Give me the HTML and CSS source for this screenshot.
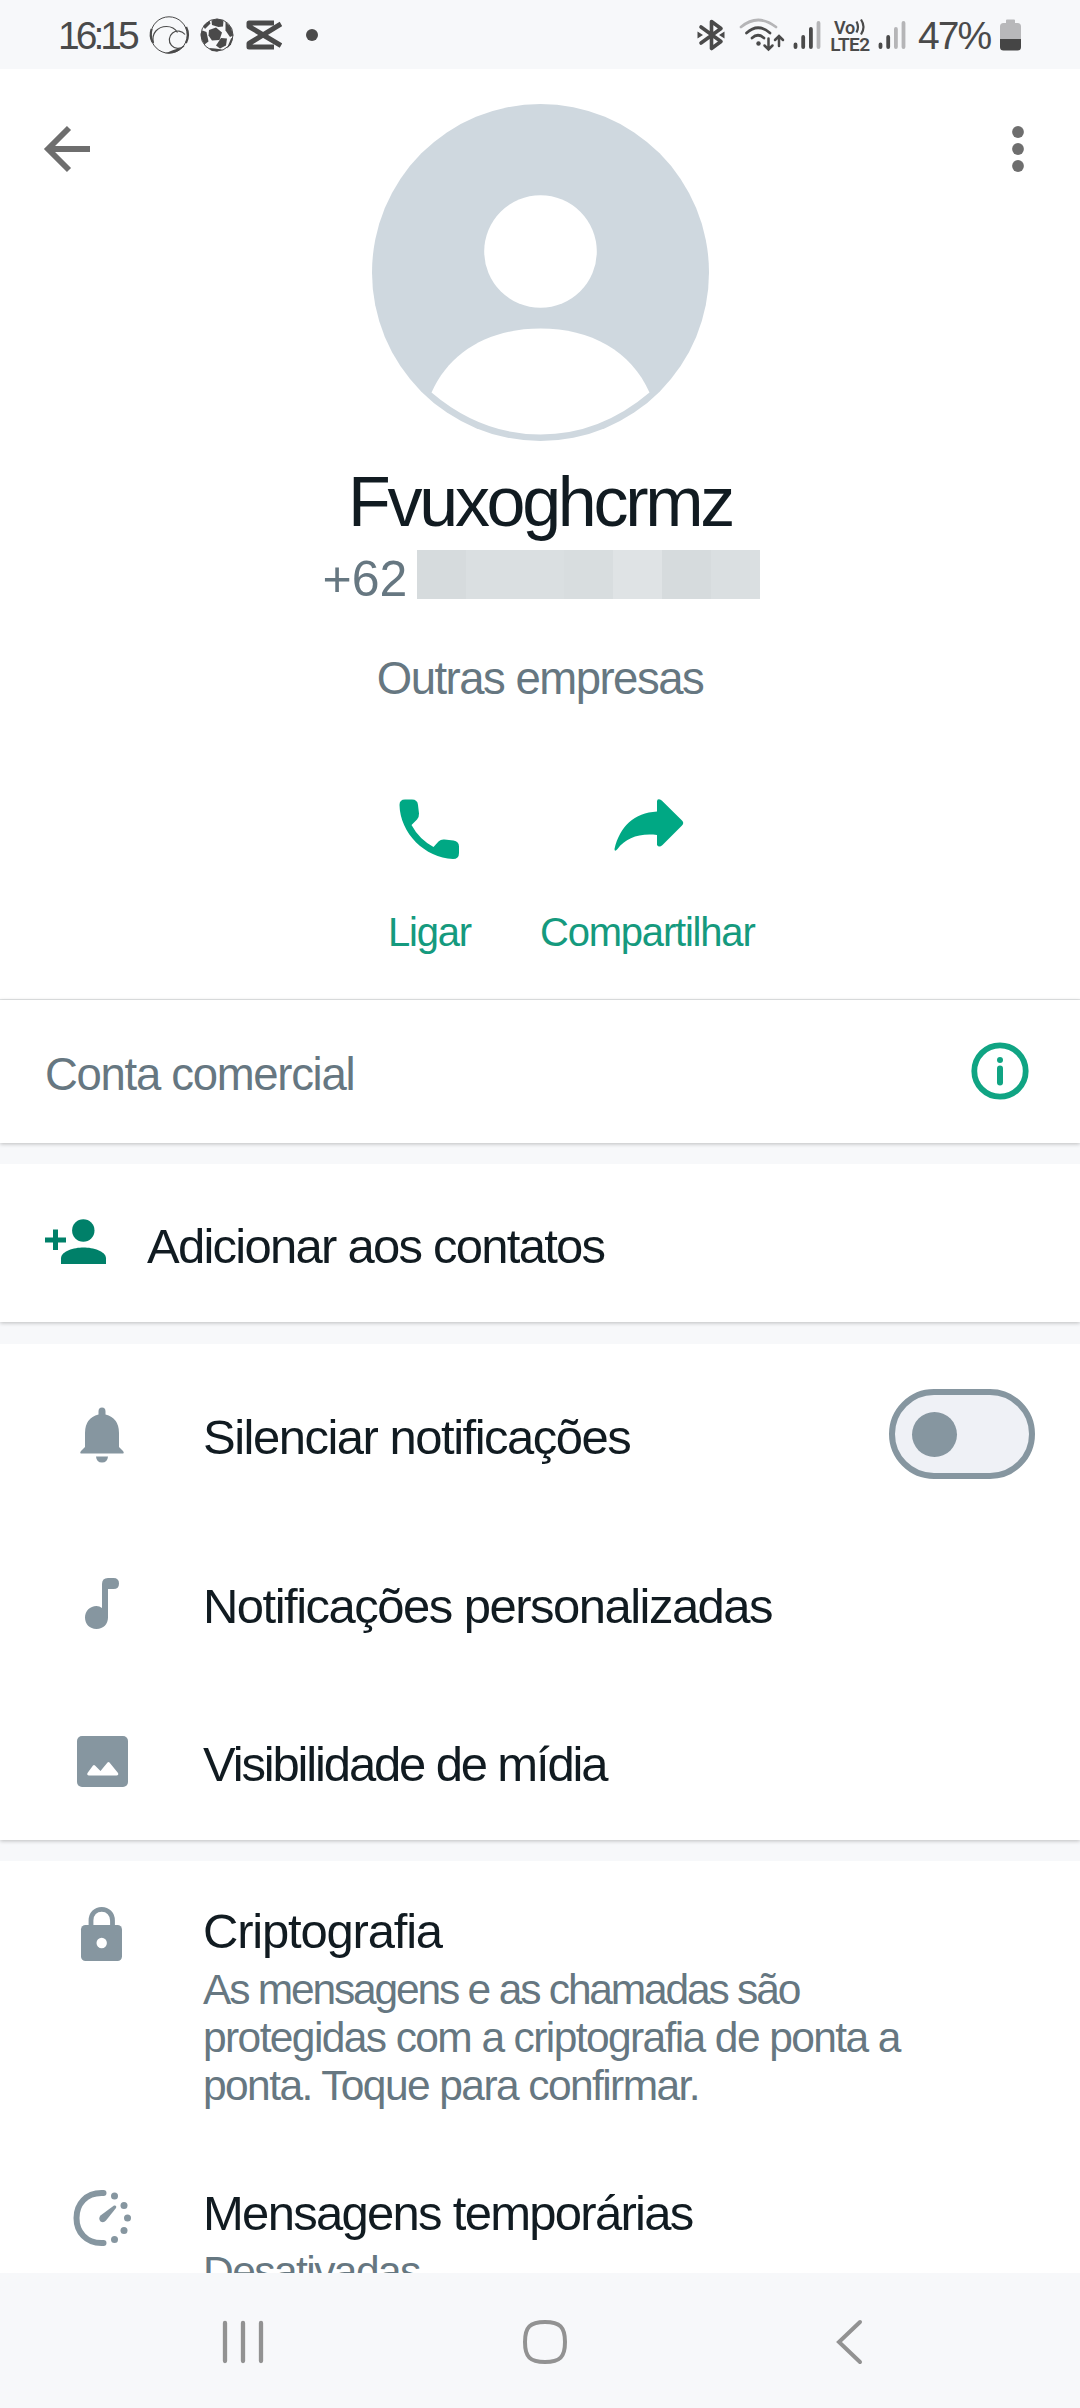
FILE: index.html
```html
<!DOCTYPE html>
<html lang="pt-BR">
<head>
<meta charset="utf-8">
<title>Dados do contato</title>
<link rel="stylesheet" href="styles.css">
</head>
<body>
<div class="screen">
  <header class="status">
    <div class="status-left">
      <span class="clock">16:15</span>
      <svg class="st-swirl" width="40" height="40" viewBox="0 0 40 40" fill="none" stroke="#4a4a4a">
        <circle cx="20" cy="20" r="18.2" stroke-width="1"/>
        <path d="M3.5 27A17.6 17.6 0 0 1 2.6 14" stroke-width="2.2"/>
        <path d="M37.2 12A18 18 0 0 1 37 28" stroke-width="2"/>
        <path d="M4.5 28C2 18 9 11.500 17.500 11.500C23.500 11.500 27 15 28.500 17.500" stroke-width="1.200"/>
        <path d="M36 19.500A8.700 8.700 0 1 0 35 31" stroke-width="1.200"/>
        <path d="M14 37.800C21 38.500 22 34 33 33C29 37.500 22 39.500 14 37.800Z" fill="#4a4a4a" stroke="none"/>
      </svg>
      <svg class="st-ball" width="34" height="34" viewBox="0 0 34 34">
        <circle cx="17" cy="17" r="16" fill="#f7f8fa" stroke="#4a4a4a" stroke-width="1"/>
        <g fill="#4a4a4a">
          <path d="M9 12L16 9.500L22 14.500L19.500 22L12 22.500L8.500 17.500Z"/>
          <path d="M11.500 2.500L17 .8L23.500 2.500L23 8.500L18.500 9L12 7Z"/>
          <path d="M25.500 3.800L31 9.500L33.300 17.500L30 19L25.500 12.500Z"/>
          <path d="M2.500 12.500L6.500 14L8.500 23.500L4.500 26.500L1 20L.8 15Z"/>
          <path d="M16 27.500L21 20L27 20.500L26 27.500L20 30.500Z"/>
          <path d="M9 30L15 30.500L22 31.500L17 33.500L12 33Z"/>
          <path d="M28.500 26.500L31 20.500L33 19.500L31 26.500L27 30.500Z"/>
          <path d="M3 8L9.500 2.800L10.500 5.500L5 11Z"/>
        </g>
      </svg>
      <svg class="st-cut" width="36" height="30" viewBox="0 0 36 30" fill="none" stroke="#4a4a4a" stroke-width="5" stroke-linejoin="round">
        <path d="M28 3H3V6.500L35 25.500"/>
        <path d="M28 27H3V23.500L35 4"/>
      </svg>
      <span class="st-dot"></span>
    </div>
    <div class="status-right">
      <svg class="st-bt" width="28" height="32" viewBox="0 0 28 32">
        <path d="M4 8L24 22.500L14.500 29.500V2.500L24 9.500L4 24" fill="none" stroke="#4a4a4a" stroke-width="3.600" stroke-linejoin="round" stroke-linecap="round"/>
        <path d="M.5 12.500L6 16L.5 19.500ZM27.500 12.500L22 16L27.500 19.500Z" fill="#4a4a4a"/>
      </svg>
      <svg class="st-wifi" width="46" height="34" viewBox="0 0 46 34" fill="none" stroke="#4a4a4a" stroke-width="2.700" stroke-linecap="round">
        <path d="M2 9Q19 -5 37 9" stroke="#b5b5b7"/>
        <path d="M7.500 15Q19 4.500 31 15"/>
        <path d="M13 20Q19 14.500 25 20"/>
        <circle cx="19.500" cy="25.500" r="2.200" fill="#4a4a4a" stroke="none"/>
        <path d="M29.500 20.500V31M25.500 27.500L29.500 31.500L33.500 27.500M40 28V19M36 22L40 18L44 22" stroke-width="2.500"/>
      </svg>
      <svg class="st-sig1" width="28" height="30" viewBox="0 0 28 30" stroke-width="3.800" stroke-linecap="round">
        <path d="M2.500 24.500V27M10.200 17V27M17.900 9V27" stroke="#4a4a4a"/>
        <path d="M25.500 3V27" stroke="#b5b5b7"/>
      </svg>
      <div class="volte"><span class="vo">Vo<svg width="11" height="16" viewBox="0 0 11 16" fill="none" stroke="#4a4a4a" stroke-width="2.200"><path d="M1.500 2.500Q4.500 8 1.500 13.500M6 .5Q11 8 6 15.500"/></svg></span><span class="lte">LTE2</span></div>
      <svg class="st-sig2" width="28" height="30" viewBox="0 0 28 30" stroke-width="3.800" stroke-linecap="round">
        <path d="M2.500 24.500V27M10.200 17V27" stroke="#4a4a4a"/>
        <path d="M17.900 9V27M25.500 3V27" stroke="#b5b5b7"/>
      </svg>
      <span class="percent">47%</span>
      <svg class="st-bat" width="21" height="32" viewBox="0 0 21 32">
        <path d="M6 1.500Q6 .5 7 .5H14Q15 .5 15 1.500V4H17.500Q21 4 21 7.500V20H0V7.500Q0 4 3.500 4H6Z" fill="#b8b8ba"/>
        <path d="M0 20H21V28Q21 31.500 17.500 31.500H3.500Q0 31.500 0 28Z" fill="#454545"/>
      </svg>
    </div>
  </header>

  <section class="profile">
    <div class="topbar">
      <svg class="back" width="48" height="48" viewBox="0 0 48 48" fill="none" stroke="#6e6e6e" stroke-width="5.800"><path d="M47 24H5M26 3L5 24L26 45"/></svg>
      <svg class="avatar" width="337" height="337" viewBox="0 0 337 337">
        <circle cx="168.500" cy="168.500" r="168.500" fill="#cfd8df"/>
        <circle cx="168.500" cy="147.500" r="56.300" fill="#fff"/>
        <path d="M59.500 288.500C78 247 118 224.500 168.500 224.500S259 247 277.500 288.500Q228 330.500 168.500 330.500T59.500 288.500Z" fill="#fff"/>
      </svg>
      <svg class="more" width="12" height="48" viewBox="0 0 12 48" fill="#6e6e6e"><circle cx="6" cy="7" r="5.900"/><circle cx="6" cy="24" r="5.900"/><circle cx="6" cy="41" r="5.900"/></svg>
    </div>
    <h1 class="name">Fvuxoghcrmz</h1>
    <div class="phone">
      <span class="code">+62</span>
      <span class="mask"><i class="m1"></i><i class="m2"></i><i class="m2"></i><i class="m3"></i><i class="m4"></i><i class="m1"></i><i class="m2"></i></span>
    </div>
    <p class="category">Outras empresas</p>
    <div class="actions">
      <div class="action">
        <svg width="60" height="60" viewBox="0 0 60 60" fill="#00a884"><path d="M6 .5H13Q18.500 .5 19 6L20 14.500Q20.200 18 18 20.500L12.500 26Q20 40 34.500 48L39.500 42.500Q42 40 45.500 40.500L54.500 41.500Q60 42.500 60 47.500V54Q60 60 54 60C26 59 1 34 .5 6Q.5 .5 6 .5Z"/></svg>
        <span class="label call">Ligar</span>
      </div>
      <div class="action">
        <svg class="share-icon" width="70" height="60" viewBox="0 0 70 60" fill="#00a884"><path d="M43 12.500V2.500Q43 -.5 46 .5Q47 .7 48 1.800L68 21.500Q70.500 24 68 26.500L48.500 46Q45 49 43 46V36C25 34 12 39 3.500 50Q.5 53.500 .5 50C6 27 20 14 43 12.500Z"/></svg>
        <span class="label share">Compartilhar</span>
      </div>
    </div>
  </section>

  <section class="card business">
    <span class="muted">Conta comercial</span>
    <svg width="58" height="58" viewBox="0 0 58 58"><circle cx="29" cy="29" r="25.700" fill="none" stroke="#10a483" stroke-width="5.800"/><circle cx="29" cy="18" r="3" fill="#10a483"/><path d="M29 26.500V40.500" stroke="#10a483" stroke-width="6" stroke-linecap="round"/></svg>
  </section>

  <section class="card add">
    <svg width="62" height="46" viewBox="0 0 62 46" fill="#008069"><path d="M8 10.500H13V18.500H21V23.500H13V31H8V23.500H0V18.500H8Z"/><circle cx="38.300" cy="11.500" r="11.200"/><path d="M16 45V39.500C16 32 29 28.500 38.500 28.500S61 32 61 39.500V45Z"/></svg>
    <span>Adicionar aos contatos</span>
  </section>

  <section class="card settings">
    <div class="row mute">
      <svg width="60" height="60" viewBox="0 0 60 60" fill="#8696a0"><path d="M26.500 4.500Q26.500 .5 30 .5T33.500 4.500V7.500Q47 11 47 26V40L51 44Q52.500 46 51 46.500H9Q7.500 46 9 44L13 40V26Q13 11 26.500 7.500ZM24 49.500H36Q35.500 55.500 30 55.500T24 49.500Z"/></svg>
      <span class="t-mute">Silenciar notificações</span>
      <span class="toggle"><span class="knob"></span></span>
    </div>
    <div class="row custom">
      <svg width="60" height="60" viewBox="0 0 60 60" fill="#8696a0"><path d="M30 32V8Q30 2 36 2H41.500Q47 2 47 7.500T41.500 13H36V41.500C36 48 31.500 53 24.500 53S13 48 13 41.500S18 30 24.500 30Q27.500 30 30 32Z"/></svg>
      <span class="t-custom">Notificações personalizadas</span>
    </div>
    <div class="row media">
      <svg width="60" height="60" viewBox="0 0 60 60"><rect x="5" y="2" width="51" height="51" rx="5" fill="#8696a0"/><path d="M17 41.500H44.500Q47 41 46 39L37.500 28.500Q36.500 27.500 35.500 28.500L28.500 37L23 31.500Q22 30.500 21 31.500L15.500 39Q14.500 41 17 41.500Z" fill="#fff"/></svg>
      <span class="t-media">Visibilidade de mídia</span>
    </div>
  </section>

  <section class="card privacy">
    <div class="row encryption">
      <svg width="60" height="60" viewBox="0 0 60 60"><path d="M19 23V16.500C19 10 23.500 5.300 29.700 5.300S40.500 10 40.500 16.500V23" fill="none" stroke="#8696a0" stroke-width="4.800"/><rect x="9" y="21" width="41" height="36" rx="4.500" fill="#8696a0"/><circle cx="29.700" cy="39" r="5.200" fill="#fff"/></svg>
      <div class="copy">
        <span class="t-crypto">Criptografia</span>
        <p class="detail"><span class="l1">As mensagens e as chamadas são</span> <span class="l2">protegidas com a criptografia de ponta a</span> <span class="l3">ponta. Toque para confirmar.</span></p>
      </div>
    </div>
    <div class="row timer">
      <svg width="60" height="60" viewBox="0 0 60 60" fill="#8696a0"><path d="M31.500 6H29.500C14 6 4.500 17 4.500 31S14 56 29.500 56H31.500" fill="none" stroke="#8696a0" stroke-width="6" stroke-linecap="round"/><circle cx="42.500" cy="9" r="3.500"/><circle cx="52" cy="18.500" r="3.500"/><circle cx="55.500" cy="31" r="3.500"/><circle cx="52" cy="43.500" r="3.500"/><circle cx="42.500" cy="52.500" r="3.500"/><path d="M42 18.500Q45 18 44 21L34 33.500Q31.500 36.500 28.500 34.500Q26 31.500 28.500 28.500Z"/></svg>
      <div class="copy">
        <span class="t-timer">Mensagens temporárias</span>
        <p class="detail"><span class="off">Desativadas</span></p>
      </div>
    </div>
  </section>

  <nav class="navbar">
    <svg width="42" height="46" viewBox="0 0 42 46" stroke="#929292" stroke-width="4.300" stroke-linecap="round"><path d="M3 4V42M21 4V42M39 4V42"/></svg>
    <svg class="home" width="46" height="46" viewBox="0 0 46 46" fill="none" stroke="#929292" stroke-width="4"><path d="M23 3C38 3 43 8 43 23S38 43 23 43S3 38 3 23S8 3 23 3Z"/></svg>
    <svg width="28" height="46" viewBox="0 0 28 46" fill="none" stroke="#929292" stroke-width="4" stroke-linecap="round"><path d="M25 3L4 23L25 43"/></svg>
  </nav>
</div>
</body>
</html>
```
FILE: styles.css
```css
* { box-sizing: border-box; }
body { margin: 0; background: #f7f8fa; }
svg { display: block; flex: none; overflow: visible; }
h1, p { margin: 0; font-weight: 400; }

.screen {
  width: 1080px;
  height: 2408px;
  display: flex;
  flex-direction: column;
  overflow: hidden;
  font-family: "Liberation Sans", Arial, sans-serif;
  color: #111b21;
  white-space: nowrap;
}

/* Status bar */
.status {
  height: 69px;
  flex: none;
  padding: 0 59px 0 58px;
  display: flex;
  justify-content: space-between;
  color: #4a4a4a;
  font-size: 39px;
  line-height: 44px;
}
.status-left, .status-right { display: flex; align-items: center; height: 70px; }
.clock { width: 91px; padding-top: 2px; letter-spacing: -4px; }
.st-ball { margin-left: 10.500px; }
.st-cut { margin-left: 12px; overflow: hidden; }
.st-dot { width: 12px; height: 12px; border-radius: 50%; background: #4a4a4a; margin-left: 24px; }
.st-wifi { margin-left: 14px; }
.st-sig1 { margin-left: 8px; }
.volte { margin-left: 9px; width: 40px; font-family: Roboto, sans-serif; font-weight: 600; color: #4a4a4a; display: flex; flex-direction: column; align-items: center; padding-top: 2px; }
.vo, .lte { font-size: 18px; line-height: 17px; letter-spacing: -.3px; }
.vo { display: flex; }
.lte { font-size: 19px; line-height: 18px; letter-spacing: -.5px; }
.st-sig2 { margin-left: 8px; }
.percent { margin-left: 12px; width: 77px; padding-top: 2px; letter-spacing: -2px; }
.st-bat { margin-left: 5px; }

/* Profile */
.profile {
  height: 931px;
  flex: none;
  background: #fff;
  border-bottom: 1px solid #e4e6e7;
  display: flex;
  flex-direction: column;
  align-items: center;
}
.topbar {
  width: 100%;
  padding: 35px 56px 0 43px;
  display: flex;
  justify-content: space-between;
  align-items: flex-start;
}
.back { margin-top: 21px; }
.avatar { margin-left: -22.500px; }
.more { margin-top: 21px; }
.name { margin-top: 21px; font-size: 70px; line-height: 80px; letter-spacing: -3.300px; }
.phone { margin-top: 8px; display: flex; height: 60px; }
.code { width: 96px; padding: 4px 0 0 2px; font-size: 50px; line-height: 50px; color: #667781; }
.mask { display: flex; height: 49px; }
.mask i { width: 49px; }
.m1 { background: #d6dbdd; }
.m2 { background: #dadfe1; }
.m3 { background: #d8dddf; }
.m4 { background: #dfe3e5; }
.category { margin-top: 39px; font-size: 45.500px; line-height: 60px; letter-spacing: -1.500px; color: #667781; }
.actions { margin-top: 90px; width: 100%; padding-left: 388px; display: flex; gap: 69px; }
.action { display: flex; flex-direction: column; align-items: center; }
.share-icon { margin-left: 4px; }
.label { margin-top: 48px; font-size: 40px; line-height: 50px; letter-spacing: -1.200px; color: #159a7e; }

/* Cards */
.card { flex: none; background: #fff; box-shadow: 0 1px 4px rgba(0, 0, 0, .24); margin-bottom: 21px; position: relative; }
.card + .card { clip-path: inset(0 0 -8px 0); }
.business { height: 143px; padding: 42px 51px 0 45px; display: flex; justify-content: space-between; }
.muted { margin-top: 3px; font-size: 45.500px; line-height: 60px; letter-spacing: -1.300px; color: #667781; }
.add { height: 158px; margin-bottom: 22px; padding: 52px 0 0 45px; display: flex; gap: 40px; font-size: 49px; line-height: 60px; letter-spacing: -1.750px; }
.add svg { margin-top: 3px; }

.settings { height: 496px; font-size: 49px; line-height: 60px; }
.row { display: flex; padding-left: 72px; gap: 71px; }
.mute { height: 186px; align-items: center; padding-right: 45px; }
.custom { height: 152px; align-items: center; }
.media { height: 158px; padding-top: 52px; }
.t-mute { letter-spacing: -1.500px; }
.t-custom { letter-spacing: -1.520px; }
.t-media { letter-spacing: -2.150px; }
.toggle {
  width: 146px;
  height: 90px;
  margin: -6px 0 0 auto;
  border: 6px solid #8696a0;
  border-radius: 45px;
  background: #eff1f6;
  display: flex;
  align-items: center;
  padding-left: 17px;
}
.knob { width: 45px; height: 45px; border-radius: 50%; background: #8696a0; }

.privacy { flex: 1 1 0; margin-bottom: 0; overflow: hidden; box-shadow: none; font-size: 49px; line-height: 60px; }
.encryption { height: 283px; padding-top: 40px; }
.encryption svg { margin-top: 3px; }
.timer { padding-top: 39px; }
.timer svg { margin-top: 4px; }
.copy { display: flex; flex-direction: column; }
.t-crypto { letter-spacing: -1.200px; }
.t-timer { letter-spacing: -1.720px; }
.detail { margin-top: 5px; font-size: 42.500px; line-height: 48px; color: #667781; }
.detail span { display: block; }
.l1 { letter-spacing: -2.180px; }
.l2 { letter-spacing: -1.600px; }
.l3 { letter-spacing: -1.580px; }
.off { letter-spacing: -1.550px; }

/* System navigation */
.navbar {
  height: 135px;
  flex: none;
  position: relative;
  background: #f7f8fa;
  padding: 46px 217px 0 222px;
  display: flex;
  justify-content: space-between;
}
.home { margin-right: 9px; }
```
